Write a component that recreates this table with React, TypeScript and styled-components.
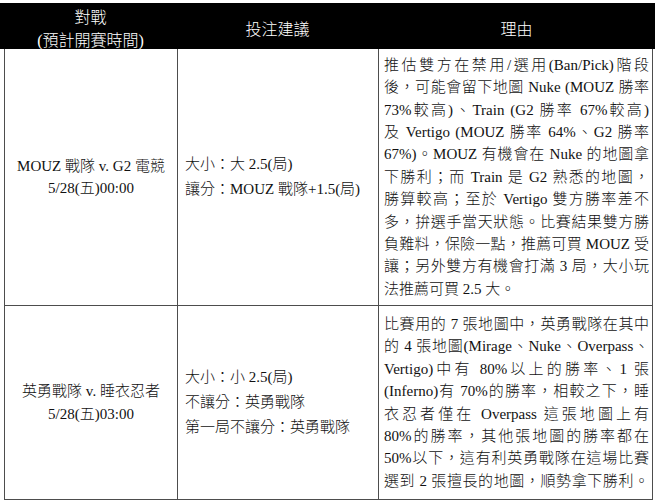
import React from 'react';
import styled, { createGlobalStyle } from 'styled-components';

const GlobalStyle = createGlobalStyle`
  html, body {
    margin: 0;
    padding: 0;
    background: #fff;
  }
  body {
    font-family: "Liberation Serif", "Noto Sans CJK TC", serif;
    font-weight: 300;
    color: #111;
  }
`;

const Page = styled.div`
  width: 656px;
  padding-top: 3px;
`;

const HeaderRow = styled.div`
  display: grid;
  grid-template-columns: 173px 201px 1fr;
  width: 655px;
  height: 46px;
  padding-left: 4px;
  box-sizing: border-box;
  background: #000;
  color: #fff;
  font-size: 16px;
  line-height: 23px;
`;

const HeaderCell = styled.div`
  display: flex;
  flex-direction: column;
  align-items: center;
  justify-content: center;
  padding-top: 3px;
`;

const Body = styled.div`
  margin-left: 4px;
  width: 649px;
  box-sizing: border-box;
  border-left: 1px solid #4d4d4d;
  border-right: 1px solid #4d4d4d;
`;

const Row = styled.div<{ $height: number }>`
  display: grid;
  grid-template-columns: 172px 201px 1fr;
  height: ${p => p.$height}px;
  box-sizing: border-box;
  border-bottom: 1px solid #4d4d4d;
  font-size: 15px;
`;

const MatchCell = styled.div`
  display: flex;
  flex-direction: column;
  align-items: center;
  justify-content: center;
  text-align: center;
  line-height: 22.5px;
`;

const TipCell = styled.div`
  display: flex;
  flex-direction: column;
  justify-content: center;
  border-left: 1px solid #4d4d4d;
  padding-left: 7px;
  line-height: 25px;
`;

const ReasonCell = styled.div`
  display: flex;
  flex-direction: column;
  justify-content: center;
  border-left: 1px solid #4d4d4d;
  padding: 0 3px 0 5px;
  line-height: 22.4px;
`;

const Line = styled.span<{ $last?: boolean }>`
  display: block;
  text-align: ${p => (p.$last ? 'left' : 'justify')};
  text-align-last: ${p => (p.$last ? 'left' : 'justify')};
`;

const rows = [
  {
    match: ['MOUZ 戰隊  v. G2 電競', '5/28(五)00:00'],
    tips: ['大小：大 2.5(局)', '讓分：MOUZ 戰隊+1.5(局)'],
    reason: [
      '推估雙方在禁用/選用(Ban/Pick)階段',
      '後，可能會留下地圖 Nuke (MOUZ 勝率',
      '73%較高)、Train (G2 勝率 67%較高)',
      '及 Vertigo (MOUZ 勝率 64%、G2 勝率',
      '67%)。MOUZ 有機會在 Nuke 的地圖拿',
      '下勝利；而 Train 是 G2 熟悉的地圖，',
      '勝算較高；至於 Vertigo 雙方勝率差不',
      '多，拚選手當天狀態。比賽結果雙方勝',
      '負難料，保險一點，推薦可買 MOUZ 受',
      '讓；另外雙方有機會打滿 3 局，大小玩',
      '法推薦可買 2.5 大。',
    ],
    height: 257,
  },
  {
    match: ['英勇戰隊 v. 睡衣忍者', '5/28(五)03:00'],
    tips: ['大小：小 2.5(局)', '不讓分：英勇戰隊', '第一局不讓分：英勇戰隊'],
    reason: [
      '比賽用的 7 張地圖中，英勇戰隊在其中',
      '的 4 張地圖(Mirage、Nuke、Overpass、',
      'Vertigo)中有 80%以上的勝率、1 張',
      '(Inferno)有 70%的勝率，相較之下，睡',
      '衣忍者僅在 Overpass 這張地圖上有',
      '80%的勝率，其他張地圖的勝率都在',
      '50%以下，這有利英勇戰隊在這場比賽',
      '選到 2 張擅長的地圖，順勢拿下勝利。',
    ],
    height: 194,
  },
];

export default function App() {
  return (
    <Page>
      <GlobalStyle />
      <HeaderRow>
        <HeaderCell>
          <span>對戰</span>
          <span>(預計開賽時間)</span>
        </HeaderCell>
        <HeaderCell>投注建議</HeaderCell>
        <HeaderCell>理由</HeaderCell>
      </HeaderRow>
      <Body>
        {rows.map((row, i) => (
          <Row key={i} $height={row.height}>
            <MatchCell>
              {row.match.map(t => (
                <span key={t}>{t}</span>
              ))}
            </MatchCell>
            <TipCell>
              {row.tips.map(t => (
                <span key={t}>{t}</span>
              ))}
            </TipCell>
            <ReasonCell>
              {row.reason.map((t, j) => (
                <Line key={j} $last={j === row.reason.length - 1 && i === 0}>
                  {t}
                </Line>
              ))}
            </ReasonCell>
          </Row>
        ))}
      </Body>
    </Page>
  );
}
